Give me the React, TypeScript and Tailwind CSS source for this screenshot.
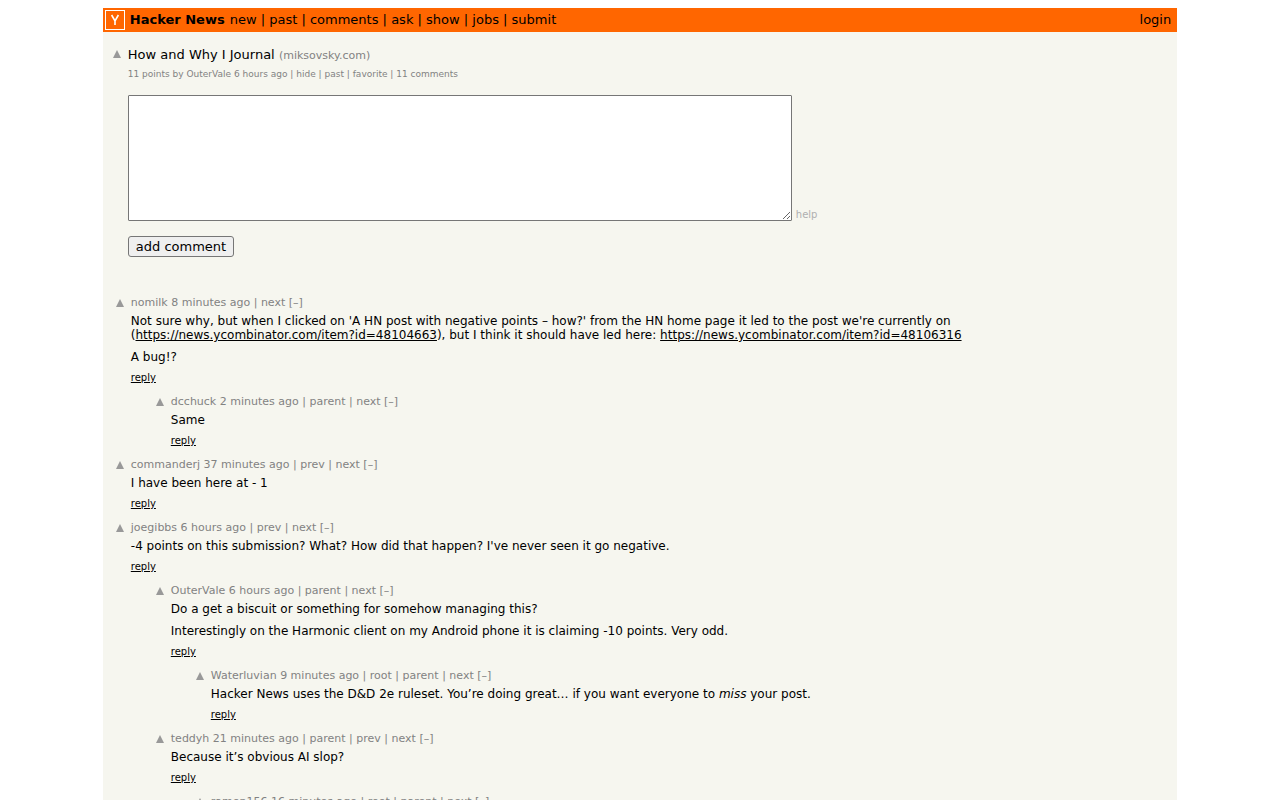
import React from "react";

interface Comment {
  user: string;
  age: string;
  links: string[];
  depth: number;
  body: React.ReactNode[];
}

const navLinks = ["new", "past", "comments", "ask", "show", "jobs", "submit"];

const comments: Comment[] = [
  {
    user: "nomilk",
    age: "8 minutes ago",
    links: ["next"],
    depth: 0,
    body: [
      <>
        Not sure why, but when I clicked on 'A HN post with negative points – how?' from the HN home page it led to the post we're currently on (
        <a href="#48104663" className="underline">https://news.ycombinator.com/item?id=48104663</a>
        ), but I think it should have led here:{" "}
        <a href="#48106316" className="underline">https://news.ycombinator.com/item?id=48106316</a>
      </>,
      "A bug!?",
    ],
  },
  { user: "dcchuck", age: "2 minutes ago", links: ["parent", "next"], depth: 1, body: ["Same"] },
  { user: "commanderj", age: "37 minutes ago", links: ["prev", "next"], depth: 0, body: ["I have been here at - 1"] },
  {
    user: "joegibbs",
    age: "6 hours ago",
    links: ["prev", "next"],
    depth: 0,
    body: ["-4 points on this submission? What? How did that happen? I've never seen it go negative."],
  },
  {
    user: "OuterVale",
    age: "6 hours ago",
    links: ["parent", "next"],
    depth: 1,
    body: [
      "Do a get a biscuit or something for somehow managing this?",
      "Interestingly on the Harmonic client on my Android phone it is claiming -10 points. Very odd.",
    ],
  },
  {
    user: "Waterluvian",
    age: "9 minutes ago",
    links: ["root", "parent", "next"],
    depth: 2,
    body: [
      <>
        Hacker News uses the D&amp;D 2e ruleset. You’re doing great… if you want everyone to <i>miss</i> your post.
      </>,
    ],
  },
  { user: "teddyh", age: "21 minutes ago", links: ["parent", "prev", "next"], depth: 1, body: ["Because it’s obvious AI slop?"] },
  { user: "ramen156", age: "16 minutes ago", links: ["root", "parent", "next"], depth: 2, body: [] },
];

function Vote() {
  return (
    <a href="#up" aria-label="upvote" className="block w-2 shrink-0 pt-[3px]">
      <svg viewBox="0 0 8 8" className="block h-2 w-2">
        <path d="M4 0 8 8H0Z" fill="#999999" />
      </svg>
    </a>
  );
}

function Logo() {
  return (
    <a href="#home" aria-label="home" className="block">
      <svg viewBox="0 0 20 20" className="block h-5 w-5">
        <rect x="0.5" y="0.5" width="19" height="19" fill="#ff6600" stroke="#ffffff" />
        <path d="M6.6 5 10 11 13.4 5M10 10.5V15" fill="none" stroke="#ffffff" strokeWidth="1.6" />
      </svg>
    </a>
  );
}

function CommentRow({ comment }: { comment: Comment }) {
  return (
    <div className="flex gap-[7px] pb-[10px]" style={{ marginLeft: comment.depth * 40 }}>
      <Vote />
      <div className="min-w-0 flex-1">
        <div className="text-[11px] leading-[14px] text-[#828282]">
          <a href="#user">{comment.user}</a> <a href="#age">{comment.age}</a>
          {comment.links.map((link) => (
            <React.Fragment key={link}>
              {" | "}
              <a href="#nav">{link}</a>
            </React.Fragment>
          ))}{" "}
          <a href="#toggle">[–]</a>
        </div>
        {comment.body.length > 0 && (
          <>
            <div className="mt-1 flex flex-col gap-2 text-[12px] leading-[14px]">
              {comment.body.map((text, i) => (
                <p key={i}>{text}</p>
              ))}
            </div>
            <div className="mt-[7px] text-[10px] leading-[14px]">
              <a href="#reply" className="underline">reply</a>
            </div>
          </>
        )}
      </div>
    </div>
  );
}

export default function App() {
  return (
    <div className="h-screen overflow-hidden bg-white px-2 pt-2 font-['DejaVu_Sans',sans-serif] text-black">
      <div className="mx-auto min-h-full w-[85%] bg-[#f6f6ef]">
        <header className="flex items-center justify-between bg-[#ff6600] py-[2px] pr-[6px] pl-[2px] text-[13px] leading-5">
          <div className="flex items-center gap-[5px]">
            <Logo />
            <a href="#home" className="font-bold">Hacker News</a>
            <nav>
              {navLinks.map((link, i) => (
                <React.Fragment key={link}>
                  {i > 0 && " | "}
                  <a href="#nav">{link}</a>
                </React.Fragment>
              ))}
            </nav>
          </div>
          <a href="#login">login</a>
        </header>

        <main>
          <section className="flex gap-[7px] pt-[15px] pl-[10px]">
            <Vote />
            <div>
              <h1 className="text-[13px] leading-4">
                <a href="#story">How and Why I Journal</a>{" "}
                <span className="text-[11px] text-[#828282]">
                  (<a href="#site">miksovsky.com</a>)
                </span>
              </h1>
              <p className="mt-[2px] text-[9px] leading-4 text-[#828282]">
                11 points by <a href="#user">OuterVale</a> <a href="#age">6 hours ago</a> | <a href="#hide">hide</a> |{" "}
                <a href="#past">past</a> | <a href="#fave">favorite</a> | <a href="#comments">11 comments</a>
              </p>
              <form className="mt-[13px]">
                <div className="flex items-end gap-1">
                  <textarea
                    aria-label="comment"
                    className="block h-[126px] w-[664px] rounded-[1px] border border-[#767676] bg-white p-[2px] text-[13px]"
                  />
                  <a href="#help" className="text-[10px] leading-3 text-[#afafaf]">help</a>
                </div>
                <button
                  type="button"
                  className="mt-[15px] block h-[21px] rounded-[3px] border border-[#767676] bg-[#efefef] px-[7px] text-[13px] leading-[19px]"
                >
                  add comment
                </button>
              </form>
            </div>
          </section>

          <section className="mt-[39px] pr-1 pl-[13px]">
            {comments.map((comment) => (
              <CommentRow key={comment.user} comment={comment} />
            ))}
          </section>
        </main>
      </div>
    </div>
  );
}
